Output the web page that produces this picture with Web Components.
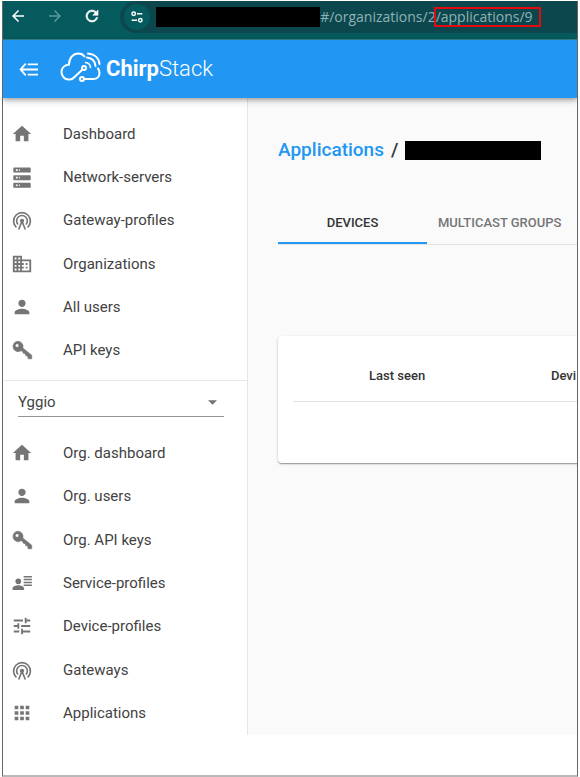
<!DOCTYPE html>
<html lang="en">
<head>
<meta charset="utf-8">
<title>ChirpStack</title>
<style>
  body { margin: 1px 2px 2px; background: #fff; font-family: Roboto, "Liberation Sans", sans-serif; }
</style>
</head>
<body>
<console-window>
  <browser-bar slot="chrome"></browser-bar>
  <app-header slot="header"></app-header>
  <side-nav slot="nav"></side-nav>
  <application-page slot="page"></application-page>
</console-window>

<script>
const define = (name, html, init) => {
  const t = document.createElement('template');
  t.innerHTML = html;
  customElements.define(name, class extends HTMLElement {
    constructor() {
      super();
      this.attachShadow({ mode: 'open' }).append(t.content.cloneNode(true));
    }
    connectedCallback() { if (init) init(this, this.shadowRoot); }
  });
};

const ICONS = {
  home: '<path d="M10 20v-6h4v6h5v-8h3L12 3 2 12h3v8z"/>',
  server: '<path fill-rule="evenodd" transform="translate(.6 1.700) scale(.95 .92)" d="M3 0h18a1 1 0 0 1 1 1v4a1 1 0 0 1-1 1H3a1 1 0 0 1-1-1V1a1 1 0 0 1 1-1zM5 2v2h2V2zM8.500 2v2h1V2zM3 9h18a1 1 0 0 1 1 1v4a1 1 0 0 1-1 1H3a1 1 0 0 1-1-1v-4a1 1 0 0 1 1-1zM5 11v2h2v-2zM8.500 11v2h1v-2zM3 18h18a1 1 0 0 1 1 1v4a1 1 0 0 1-1 1H3a1 1 0 0 1-1-1v-4a1 1 0 0 1 1-1zM5 20v2h2v-2zM8.500 20v2h1v-2z"/>',
  antenna: '<g transform="translate(1.200 1.600) scale(.9)"><g fill="none" stroke="currentColor" stroke-width="2"><path d="M5.200 20.500A10.200 10.200 0 1 1 18.800 20.500"/><path d="M7.200 17A6.500 6.500 0 1 1 16.800 17"/><path d="M8 23L12 13l4 10"/></g><circle cx="12" cy="12.500" r="2.600"/></g>',
  business: '<path d="M12 7V3H2v18h20V7H12zM6 19H4v-2h2v2zm0-4H4v-2h2v2zm0-4H4V9h2v2zm0-4H4V5h2v2zm4 12H8v-2h2v2zm0-4H8v-2h2v2zm0-4H8V9h2v2zm0-4H8V5h2v2zm10 12h-8v-2h2v-2h-2v-2h2v-2h-2V9h8v10zm-2-8h-2v2h2v-2zm0 4h-2v2h2v-2z"/>',
  person: '<path d="M12 12c2.210 0 4-1.790 4-4s-1.790-4-4-4-4 1.790-4 4 1.790 4 4 4zm0 2c-2.670 0-8 1.340-8 4v2h16v-2c0-2.660-5.330-4-8-4z"/>',
  key: '<path fill-rule="evenodd" transform="translate(1.700 1.600) scale(.87)" d="M7 1a6.500 6.500 0 1 0 3.500 12l2 .5 1 2.500 2.500.5.500 2.500 2.500.5.500 3.500H24v-4.500L12.800 9.500A6.500 6.500 0 0 0 7 1zM5.700 4a2.300 2.300 0 1 1 0 4.600 2.300 2.300 0 0 1 0-4.600z" stroke="currentColor" stroke-width=".8"/>',
  profile: '<path transform="translate(1.200 1.600) scale(.9)" d="M7.500 13a3.500 3.500 0 1 0 0-7 3.500 3.500 0 0 0 0 7zM.5 20v-2c0-2.300 4.300-3.800 7-3.800s7 1.500 7 3.800v2zM14 3h10v1.800H14zM14 6.500h10v1.800H14zM14 10h10v1.800H14zM14 13.500h10v1.800H14z"/>',
  tune: '<path d="M13 21v-2h8v-2h-8v-2h-2v6h2zM3 17v2h6v-2H3zm4-8v2H3v2h4v2h2V9H7zm14 4v-2H11v2h10zM15 9h2V7h4V5h-4V3h-2v6zM3 5v2h10V5H3z"/>',
  apps: '<path d="M4 8h4V4H4v4zm6 12h4v-4h-4v4zm-6 0h4v-4H4v4zm0-6h4v-4H4v4zm6 0h4v-4h-4v4zm6-10v4h4V4h-4zm-6 4h4V4h-4v4zm6 6h4v-4h-4v4zm0 6h4v-4h-4v4z"/>',
  back: '<path d="M20 11H7.830l5.590-5.590L12 4l-8 8 8 8 1.410-1.410L7.830 13H20z"/>',
  forward: '<path d="M12 4l-1.410 1.410L16.170 11H4v2h12.170l-5.580 5.590L12 20l8-8z"/>',
  reload: '<path d="M17.650 6.350A8 8 0 1 0 19.730 14h-2.080A6 6 0 1 1 12 6c1.660 0 3.140.690 4.220 1.780L13 11h7V4z" stroke="currentColor" stroke-width=".8"/>',
  site: '<g fill="none" stroke="currentColor" stroke-width="2.200"><circle cx="7" cy="7" r="2.600"/><path d="M12 7h8M4 17h8"/><circle cx="17" cy="17" r="2.600"/></g>',
  collapse: '<g fill="none" stroke="currentColor" stroke-width="2.300"><path d="M8.500 4.500L2 12l6.500 7.500M2 12h22M11 5.500h13M11 18.500h13"/></g>'
};

customElements.define('ui-icon', class extends HTMLElement {
  static observedAttributes = ['name'];
  constructor() {
    super();
    this.attachShadow({ mode: 'open' });
  }
  attributeChangedCallback(attr, old, name) {
    this.shadowRoot.innerHTML = `<style>
      :host { display: block; flex: none; width: var(--icon-size, 22px); height: var(--icon-size, 22px); }
      svg { display: block; width: 100%; height: 100%; overflow: visible; }
    </style><svg viewBox="0 0 24 24" fill="currentColor" aria-hidden="true">${ICONS[name]}</svg>`;
  }
});

define('console-window', `<style>
  :host { display: block; border: solid #666; border-width: 0 1px; border-bottom: 2px solid #b8b8b8; padding-bottom: 40px; overflow: hidden; }
  .body { display: grid; grid-template-columns: 245px minmax(0, 1fr); }
</style>
<slot name="chrome"></slot>
<slot name="header"></slot>
<div class="body"><slot name="nav"></slot><slot name="page"></slot></div>`);

define('browser-bar', `<style>
  :host { display: flex; align-items: flex-start; background: #055a5e; border-bottom: 1px solid #327f85; height: 38px; color: #fff; --icon-size: 18px; }
  button { border: 0; padding: 0; margin: 0; background: none; color: inherit; display: grid; place-items: center; }
  .tools { display: flex; gap: 19px; padding: 6px 0 0 6px; }
  .tools [disabled] { color: #5b989b; }
  .address { flex: 1; min-width: 0; display: flex; align-items: center; margin-left: 19px; height: 32px; background: #0d474e; border-radius: 16px 0 0 16px; }
  .site { width: 26px; height: 26px; border-radius: 50%; background: #055a5e; margin: 0 6px 0 4px; --icon-size: 16px; }
  .mask { width: 164px; height: 20px; background: #000; flex: none; position: relative; z-index: 1; }
  .url { position: relative; flex: 1; min-width: 0; margin-left: -5px; }
  input { display: block; width: 100%; box-sizing: border-box; border: 0; padding: 0; background: none; color: #8fb3b6; font: 14px/20px "Open Sans", "Noto Sans", sans-serif; }
  .mark { position: absolute; left: 119px; top: 0; width: 107px; height: 20px; box-sizing: border-box; border: 2px solid #e30b0f; }
</style>
<div class="tools">
  <button aria-label="Back"><ui-icon name="back"></ui-icon></button>
  <button aria-label="Forward" disabled><ui-icon name="forward"></ui-icon></button>
  <button aria-label="Reload"><ui-icon name="reload"></ui-icon></button>
</div>
<div class="address">
  <button class="site" aria-label="Site information"><ui-icon name="site"></ui-icon></button>
  <span class="mask"></span>
  <div class="url"><input aria-label="Address" value="/#/organizations/2/applications/9"><span class="mark"></span></div>
</div>`);

define('app-header', `<style>
  :host { display: flex; align-items: center; height: 58px; padding-left: 16px; background: #2196f3; color: #fff; position: relative; z-index: 1; box-shadow: 0 2px 4px rgba(0,0,0,.25), 0 4px 7px rgba(0,0,0,.12); }
  button { border: 0; padding: 0; background: none; color: inherit; --icon-size: 19px; }
  a { display: flex; align-items: center; gap: 5px; margin-left: 22px; color: inherit; text-decoration: none; font-size: 22px; line-height: 28px; font-weight: 300; }
  b { font-weight: 700; }
  svg { display: block; }
</style>
<button aria-label="Collapse menu"><ui-icon name="collapse"></ui-icon></button>
<a href="#/"><svg width="41" height="34" viewBox="0 0 41 34" fill="none" stroke="#fff" stroke-width="2" stroke-linecap="round" aria-hidden="true">
  <path d="M22.500 17.500L14.500 25C13 26.800 12 27.500 10 27.500H8.500C4.500 27.500 1.500 24 1.500 20s3-7 7.500-7.500C9 6 13 1.500 18.500 1.500c2.500 0 4.500 1 6 3"/>
  <path d="M28 1.500C34.500 2 39 6 39.500 12M27 5.500c5 .5 8 3.500 8.500 8.500"/>
  <path d="M25.500 10.500c3 .3 4.800 2 5 5" stroke-width="1.600"/>
  <path d="M38 16.500c1 1.200 1.500 2.500 1.500 4.500 0 3.500-2.500 6-6 6H24.500"/>
  <circle cx="24" cy="16" r="2"/><circle cx="22" cy="27" r="2"/>
</svg><span><b>Chirp</b>Stack</span></a>`);

define('nav-item', `<style>
  :host { display: grid; }
  a { display: flex; align-items: center; gap: 30px; padding-left: 8px; color: #424242; text-decoration: none; font-size: 15px; line-height: 20px; }
  ui-icon { color: #757575; }
</style><a href="#/"><ui-icon></ui-icon><span><slot></slot></span></a>`,
  (host, root) => root.querySelector('ui-icon').setAttribute('name', host.getAttribute('icon')));

define('side-nav', `<style>
  :host { display: flow-root; background: #fff; border-right: 1px solid #e6e6e6; }
  nav { display: grid; grid-auto-rows: 1fr; min-height: 260px; margin-top: 14px; }
  .second { min-height: 304px; margin-top: 0; }
  .switch { border-top: 1px solid #e8e8e8; margin-top: 8px; padding-top: 7px; }
  .org { display: flex; align-items: center; position: relative; margin: 0 23px 14px 15px; border-bottom: 1px solid #949494; }
  select { appearance: none; width: 100%; height: 28px; border: 0; padding: 0 28px 0 0; background: none; color: #424242; font: 15px/20px Roboto, "Liberation Sans", sans-serif; }
  svg { position: absolute; right: 7px; pointer-events: none; }
</style>
<nav aria-label="Administration">
  <nav-item icon="home">Dashboard</nav-item>
  <nav-item icon="server">Network-servers</nav-item>
  <nav-item icon="antenna">Gateway-profiles</nav-item>
  <nav-item icon="business">Organizations</nav-item>
  <nav-item icon="person">All users</nav-item>
  <nav-item icon="key">API keys</nav-item>
</nav>
<div class="switch"><div class="org">
  <select aria-label="Organization"><option>Yggio</option></select>
  <svg width="9" height="5" viewBox="0 0 10 5" fill="#757575" aria-hidden="true"><path d="M0 0h10L5 5z"/></svg>
</div></div>
<nav class="second" aria-label="Organization">
  <nav-item icon="home">Org. dashboard</nav-item>
  <nav-item icon="person">Org. users</nav-item>
  <nav-item icon="key">Org. API keys</nav-item>
  <nav-item icon="profile">Service-profiles</nav-item>
  <nav-item icon="tune">Device-profiles</nav-item>
  <nav-item icon="antenna">Gateways</nav-item>
  <nav-item icon="apps">Applications</nav-item>
</nav>`);

define('application-page', `<style>
  :host { display: block; min-width: 0; overflow: hidden; background: #fafafa; color: #333; padding: 40px 0 0 30px; }
  h1 { display: flex; align-items: center; gap: 7px; margin: 0; font-size: 19px; line-height: 24px; font-weight: 500; }
  h1 a { color: #2196f3; text-decoration: none; }
  .mask { width: 136px; height: 19px; background: #000; }
  .tabs { display: flex; min-width: 640px; margin-top: 40px; border-bottom: 1px solid #e3e3e3; }
  .tabs button { border: 0; border-bottom: 2px solid transparent; background: none; padding: 2px 11px 0; height: 42px; color: #757575; font: 500 13px/20px Roboto, "Liberation Sans", sans-serif; white-space: nowrap; }
  .tabs button[aria-selected=true] { width: 149px; color: #333; border-color: #2196f3; }
  .card { min-width: 610px; margin-top: 91px; padding: 15px; background: #fff; border-radius: 4px; box-shadow: 0 1px 3px rgba(0,0,0,.2), 0 1px 1px rgba(0,0,0,.16), 0 2px 1px -1px rgba(0,0,0,.14); }
  table { width: 100%; border-collapse: collapse; table-layout: fixed; }
  th { height: 50px; padding: 0 0 0 24px; text-align: left; font-size: 13px; line-height: 20px; font-weight: 500; border-bottom: 1px solid #e3e3e3; }
  td { height: 46px; padding: 0; }
  .pick { width: 52px; } .seen { width: 182px; }
</style>
<h1><a href="#/applications">Applications</a><span>/</span><span class="mask"></span></h1>
<div class="tabs" role="tablist">
  <button role="tab" aria-selected="true">DEVICES</button>
  <button role="tab" aria-selected="false">MULTICAST GROUPS</button>
</div>
<section class="card"><table>
  <colgroup><col class="pick"><col class="seen"><col></colgroup>
  <thead><tr><th></th><th scope="col">Last seen</th><th scope="col">Devi</th></tr></thead>
  <tbody><tr><td colspan="3"></td></tr></tbody>
</table></section>`);
</script>
</body>
</html>
